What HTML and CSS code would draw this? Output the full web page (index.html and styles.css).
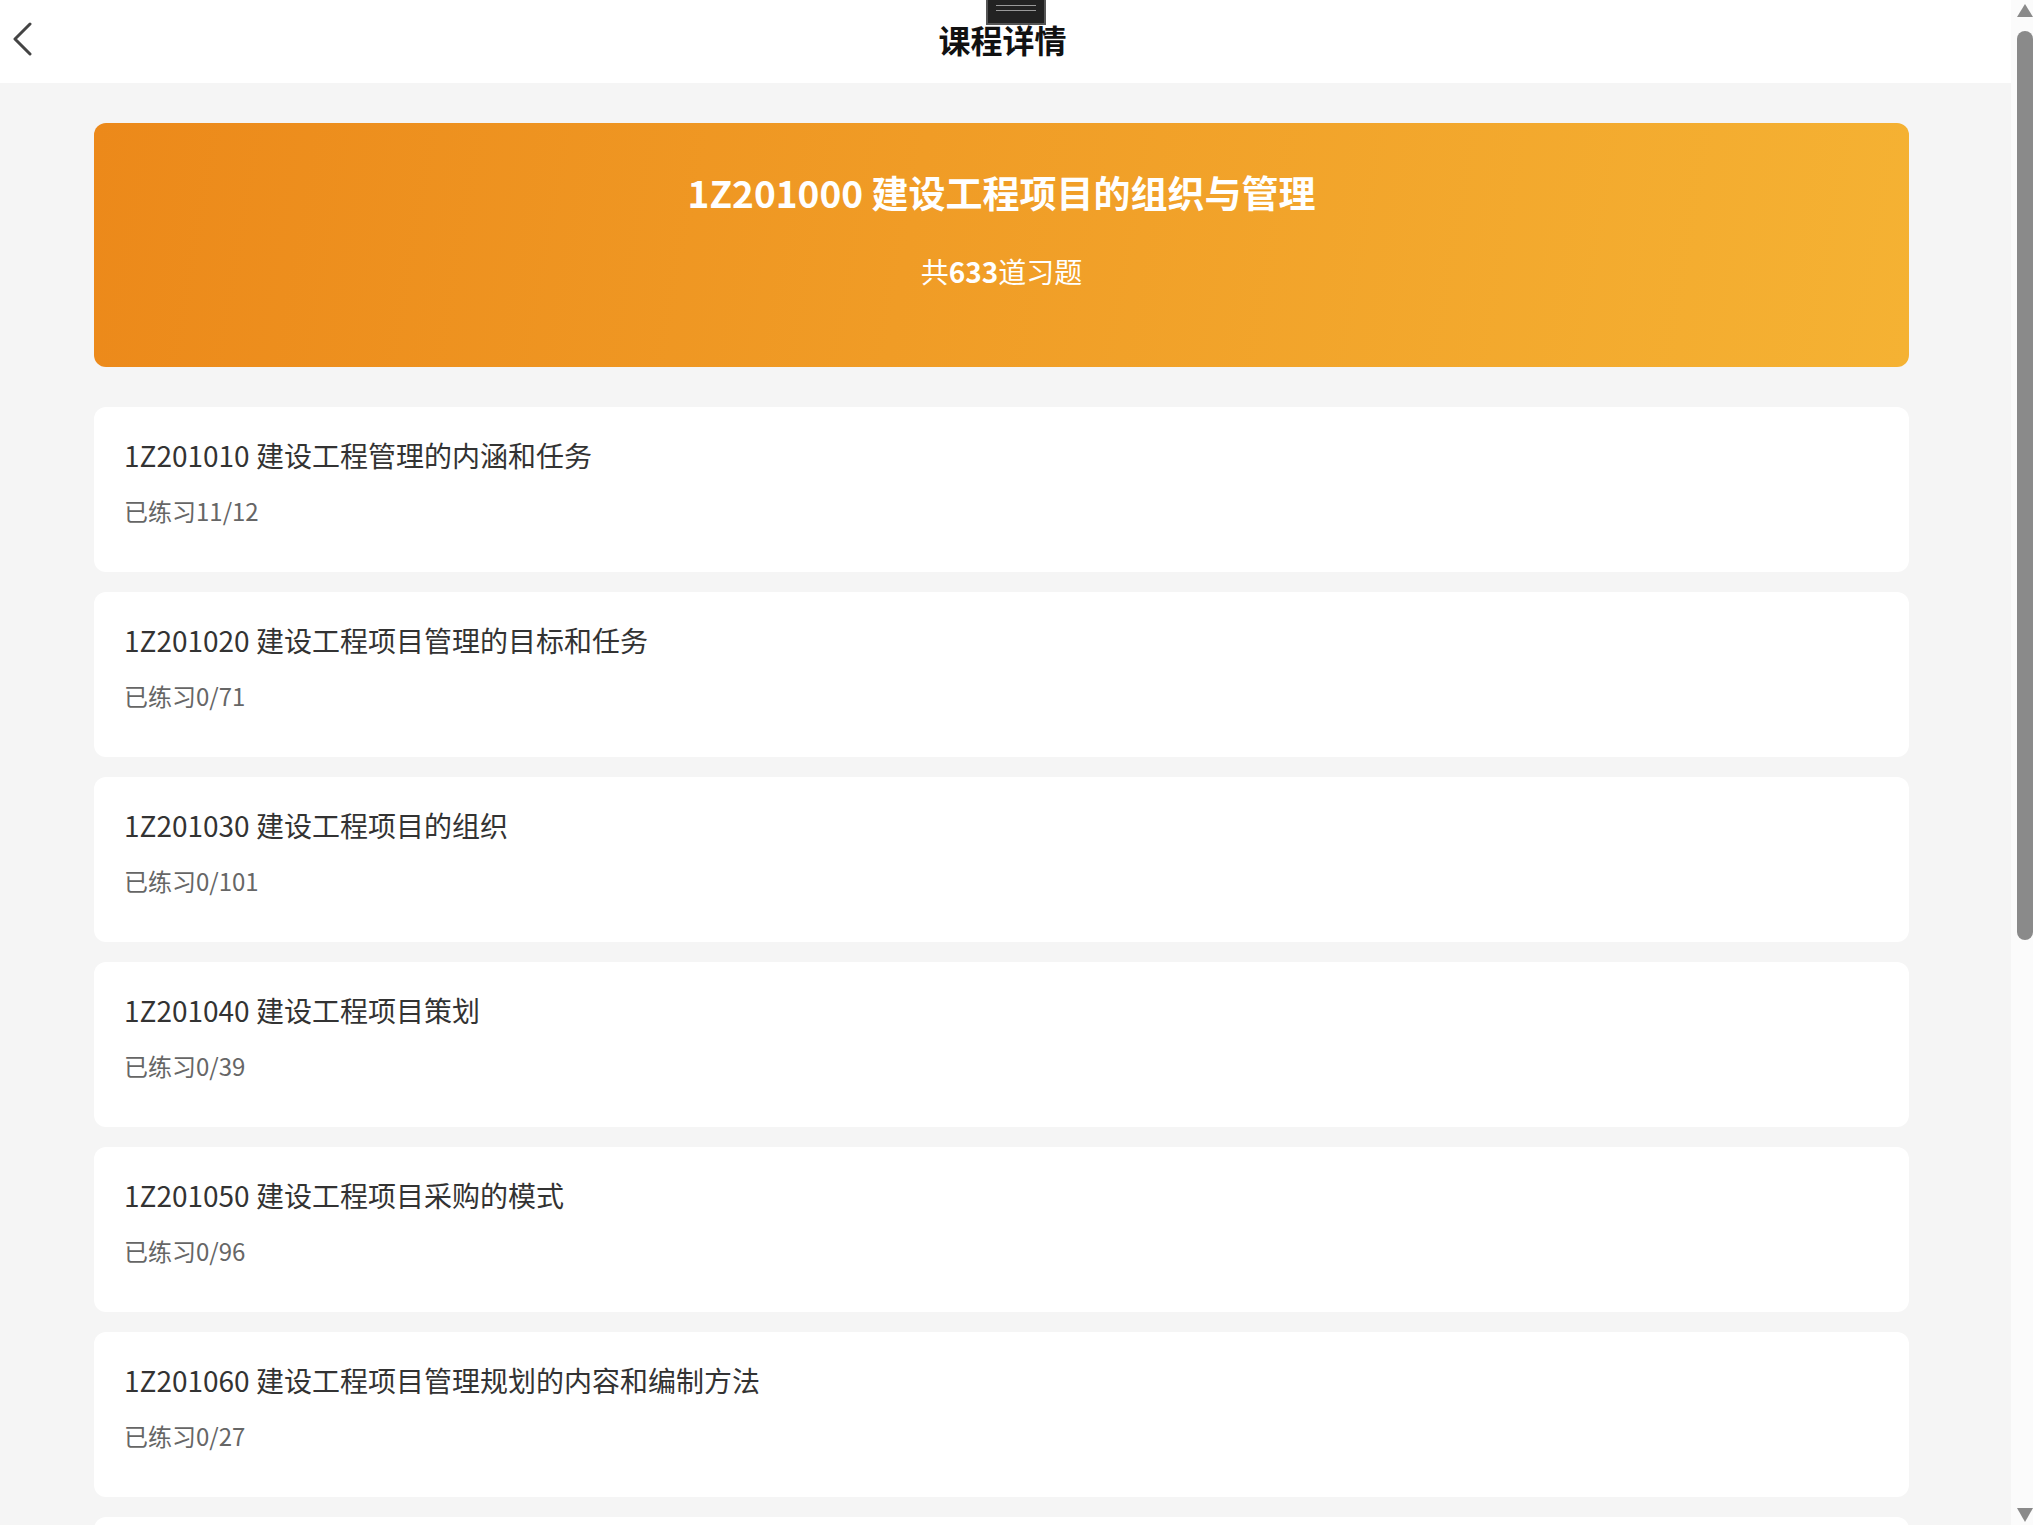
FILE: index.html
```html
<!DOCTYPE html>
<html lang="zh-CN">
<head>
    <meta charset="UTF-8">
    <meta name="viewport" content="width=device-width, initial-scale=1.0">
    <title>课程详情</title>
    <link rel="stylesheet" href="styles.css">
</head>
<body>
    <div class="page">
        <header class="topbar">
            <div class="pull-tab"><span></span><span></span></div>
            <a href="#" class="back">
                <svg width="22" height="34" viewBox="0 0 22 34">
                    <path d="M19 2 L4 17 L19 32" fill="none" stroke="#444" stroke-width="3" stroke-linecap="round" stroke-linejoin="round"/>
                </svg>
            </a>
            <div class="topbar-title">课程详情</div>
            <div></div>
        </header>
        <main class="content">
            <div class="banner">
                <div class="banner-title">1Z201000 建设工程项目的组织与管理</div>
                <div class="banner-sub">共<b>633</b>道习题</div>
            </div>
            <div class="chapter">
                <div class="chapter-title">1Z201010 建设工程管理的内涵和任务</div>
                <div class="chapter-progress">已练习11/12</div>
            </div>
            <div class="chapter">
                <div class="chapter-title">1Z201020 建设工程项目管理的目标和任务</div>
                <div class="chapter-progress">已练习0/71</div>
            </div>
            <div class="chapter">
                <div class="chapter-title">1Z201030 建设工程项目的组织</div>
                <div class="chapter-progress">已练习0/101</div>
            </div>
            <div class="chapter">
                <div class="chapter-title">1Z201040 建设工程项目策划</div>
                <div class="chapter-progress">已练习0/39</div>
            </div>
            <div class="chapter">
                <div class="chapter-title">1Z201050 建设工程项目采购的模式</div>
                <div class="chapter-progress">已练习0/96</div>
            </div>
            <div class="chapter">
                <div class="chapter-title">1Z201060 建设工程项目管理规划的内容和编制方法</div>
                <div class="chapter-progress">已练习0/27</div>
            </div>
            <div class="chapter"></div>
        </main>
    </div>
    <aside class="scrollbar">
        <svg class="arrow" width="16" height="13" viewBox="0 0 16 13"><path d="M8 0 L16 13 L0 13 Z" fill="#8a8a8a"/></svg>
        <div class="thumb"></div>
        <div class="spacer"></div>
        <svg class="arrow" width="16" height="14" viewBox="0 0 16 14"><path d="M0 0 L16 0 L8 14 Z" fill="#8a8a8a"/></svg>
    </aside>
</body>
</html>
```

FILE: styles.css
```css
body {
    font-family: "Noto Sans CJK SC", "Microsoft YaHei", sans-serif;
    background-color: #f5f5f5;
    margin: 0;
    padding: 0;
    display: flex;
    height: 100vh;
    overflow: hidden;
}
.page {
    flex: 1;
    display: flex;
    flex-direction: column;
    overflow: hidden;
}
.topbar {
    position: relative;
    height: 83px;
    flex-shrink: 0;
    background-color: #fff;
    display: grid;
    grid-template-columns: 1fr auto 1fr;
    align-items: center;
}
.back {
    display: flex;
    align-items: center;
    padding-left: 11px;
    margin-top: -6px;
}
.topbar-title {
    font-size: 32px;
    font-weight: bold;
    color: #111;
    line-height: 40px;
    margin-top: -5px;
    margin-right: 6px;
}
.pull-tab {
    position: absolute;
    top: 0;
    left: calc(50% - 20px);
    width: 56px;
    height: 18px;
    background-color: #222;
    border: 2px solid #555;
    border-top: none;
    display: flex;
    flex-direction: column;
    align-items: center;
    gap: 4px;
    padding-top: 5px;
    box-sizing: content-box;
}
.pull-tab span {
    display: block;
    width: 40px;
    height: 1px;
    background-color: #999;
}
.content {
    padding: 40px 102px 0 94px;
    display: flex;
    flex-direction: column;
    gap: 20px;
}
.banner {
    height: 244px;
    flex-shrink: 0;
    border-radius: 12px;
    background: linear-gradient(100deg, #ec891a 0%, #f09c26 45%, #f5b233 100%);
    color: #fff;
    display: flex;
    flex-direction: column;
    align-items: center;
    padding-top: 44px;
    box-sizing: border-box;
    margin-bottom: 20px;
}
.banner-title {
    font-size: 37px;
    font-weight: bold;
    line-height: 50px;
}
.banner-sub {
    font-size: 28px;
    line-height: 36px;
    margin-top: 36px;
}
.chapter {
    height: 165px;
    flex-shrink: 0;
    background-color: #fff;
    border-radius: 12px;
    padding: 28px 30px 0;
    box-sizing: border-box;
}
.chapter-title {
    font-size: 28px;
    line-height: 40px;
    color: #333;
}
.chapter-progress {
    font-size: 24px;
    line-height: 32px;
    color: #666;
    margin-top: 20px;
}
.scrollbar {
    width: 22px;
    flex-shrink: 0;
    background-color: #fbfbfb;
    display: flex;
    flex-direction: column;
    align-items: flex-end;
    padding: 4px 0 3px;
    box-sizing: border-box;
}
.scrollbar .arrow {
    display: block;
}
.thumb {
    width: 16px;
    height: 909px;
    margin-top: 14px;
    background-color: #8a8a8a;
    border-radius: 8px;
}
.spacer {
    flex: 1;
}
```
